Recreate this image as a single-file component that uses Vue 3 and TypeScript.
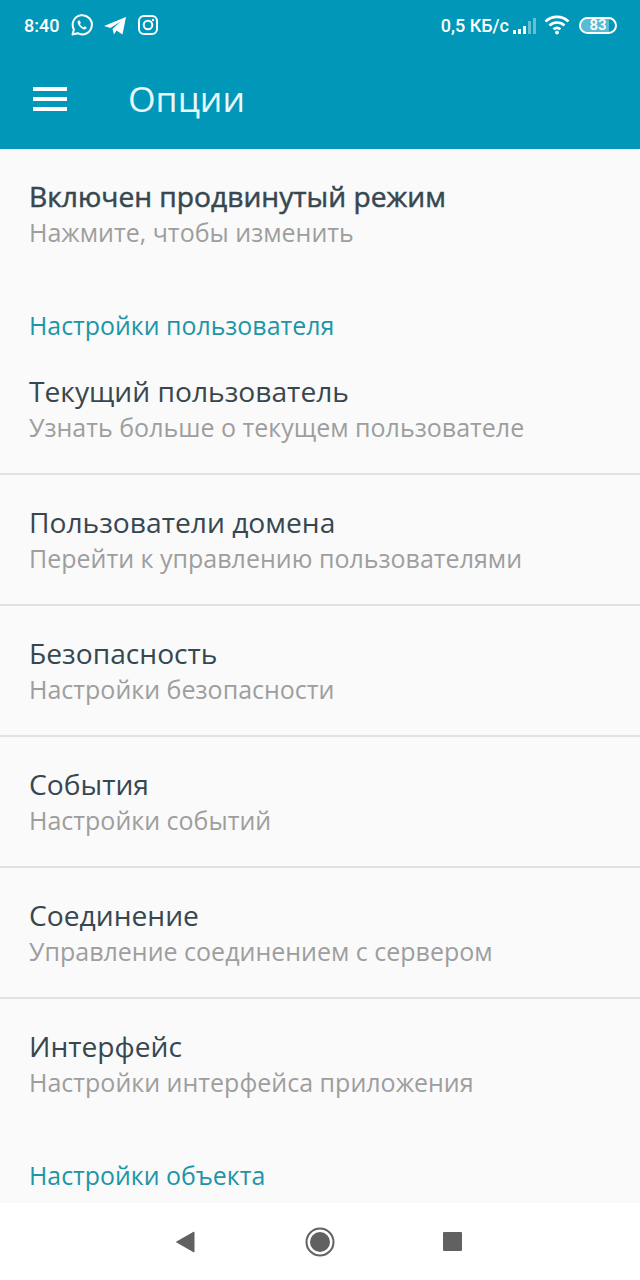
<script setup lang="ts">
interface Row {
  title: string
  sub: string
}

const userRows: Row[] = [
  { title: 'Текущий пользователь', sub: 'Узнать больше о текущем пользователе' },
  { title: 'Пользователи домена', sub: 'Перейти к управлению пользователями' },
  { title: 'Безопасность', sub: 'Настройки безопасности' },
  { title: 'События', sub: 'Настройки событий' },
  { title: 'Соединение', sub: 'Управление соединением с сервером' },
  { title: 'Интерфейс', sub: 'Настройки интерфейса приложения' },
]
</script>

<template>
  <div class="screen">
    <header class="appbar">
      <div class="status">
        <div class="status-left">
          <span class="time">8:40</span>
          <svg class="ic" width="24" height="24" viewBox="0 0 24 24" fill="none" stroke="#fff" stroke-width="2">
            <path d="M2.5 21.5l1.4-5A9.6 9.6 0 1 1 7.600 20.200z" stroke-linejoin="round" />
            <path d="M8.300 7.500c-1 1-1 2.600.4 4.800 1.500 2.300 3.600 3.900 5.500 4.100 1.300.1 2.400-.7 2.600-1.800l-2.300-1.300-1.100 1.100c-1.500-.6-2.800-1.900-3.500-3.400l1-1.100-1.100-2.500z" fill="#fff" stroke="none" />
          </svg>
          <svg class="ic" width="24" height="24" viewBox="0 0 24 24">
            <path d="M1 13L23 4 19.500 21.500 13.500 17.500 11 21.500 9.500 16 17.500 8.500 7.500 15z" fill="#fff" />
          </svg>
          <svg class="ic" width="24" height="24" viewBox="0 0 24 24" fill="none" stroke="#fff" stroke-width="2">
            <rect x="3" y="3" width="18" height="18" rx="5" />
            <circle cx="12" cy="12" r="4.300" />
            <circle cx="17" cy="7" r="1.200" fill="#fff" stroke="none" />
          </svg>
        </div>
        <div class="status-right">
          <span class="speed">0,5 КБ/с</span>
          <span class="signal">
            <i class="b1"></i><i class="b2"></i><i class="b3"></i><i class="b4 off"></i><i class="b5 off"></i>
          </span>
          <svg class="wifi" width="26" height="20" viewBox="0 0 26 20" fill="none" stroke="#fff" stroke-width="2.600">
            <path d="M1.500 6.500a16.500 16.500 0 0 1 23 0" />
            <path d="M5.500 10.500a11 11 0 0 1 15 0" />
            <path d="M9.500 14.300a5.500 5.500 0 0 1 7 0" />
            <circle cx="13" cy="17.500" r="1.900" fill="#fff" stroke="none" />
          </svg>
          <span class="battery"><span class="fill"></span><span class="level">83</span></span>
        </div>
      </div>
      <div class="toolbar">
        <div class="burger"><i></i><i></i><i></i></div>
        <h1>Опции</h1>
      </div>
    </header>

    <main class="list">
      <div class="row mode">
        <div class="title strong">Включен продвинутый режим</div>
        <div class="sub">Нажмите, чтобы изменить</div>
      </div>

      <div class="section first">Настройки пользователя</div>
      <div v-for="r in userRows" :key="r.title" class="row item">
        <div class="title">{{ r.title }}</div>
        <div class="sub">{{ r.sub }}</div>
      </div>

      <div class="section last">Настройки объекта</div>
    </main>

    <nav class="navbar">
      <svg width="24" height="26" viewBox="0 0 24 26"><path d="M21 3V23L3.500 13z" fill="#616161" stroke="#616161" stroke-linejoin="round" /></svg>
      <svg width="30" height="30" viewBox="0 0 30 30">
        <circle cx="15" cy="15" r="13.500" fill="none" stroke="#616161" stroke-width="2" />
        <circle cx="15" cy="15" r="10" fill="#616161" />
      </svg>
      <span class="square"></span>
    </nav>
  </div>
</template>

<style>
body {
  background: #fafafa;
}
</style>

<style scoped>
.screen {
  width: 640px;
  height: 1280px;
  display: flex;
  flex-direction: column;
  overflow: hidden;
  background: #fafafa;
  font-family: "Open Sans", sans-serif;
}

.appbar {
  height: 149px;
  flex: none;
  background: #0097b8;
  color: #fff;
}

.status {
  height: 50px;
  display: flex;
  align-items: center;
  justify-content: space-between;
  padding: 0 23px 0 24px;
  font-family: Roboto, sans-serif;
  font-weight: 500;
  font-size: 18px;
}

.status-left,
.status-right {
  display: flex;
  align-items: center;
}

.status-left .time {
  margin-right: 11px;
}

.status-left .ic {
  margin-right: 9px;
}

.speed {
  margin-right: 4px;
}

.signal {
  display: flex;
  align-items: flex-end;
  gap: 2px;
  height: 18px;
  margin-right: 8px;
}

.signal i {
  width: 3px;
  background: #fff;
}

.signal i.off {
  opacity: 0.4;
}

.b1 { height: 4px; }
.b2 { height: 5px; }
.b3 { height: 8px; }
.b4 { height: 13px; }
.b5 { height: 16px; }

.wifi {
  margin-right: 9px;
}

.battery {
  position: relative;
  width: 34px;
  height: 13px;
  border: 2px solid #fff;
  border-radius: 9px;
  display: flex;
  align-items: center;
  justify-content: center;
  overflow: hidden;
  box-sizing: content-box;
}

.battery .fill {
  position: absolute;
  left: 0;
  top: 0;
  bottom: 0;
  width: 83%;
  background: rgba(255, 255, 255, 0.35);
}

.battery .level {
  position: relative;
  font-size: 15px;
  line-height: 1;
}

.toolbar {
  height: 97px;
  padding-bottom: 2px;
  display: flex;
  align-items: center;
  padding-left: 33px;
}

.burger {
  width: 34px;
  display: flex;
  flex-direction: column;
  gap: 6px;
  margin-right: 61px;
}

.burger i {
  height: 4px;
  background: #fff;
}

h1 {
  margin: 0;
  font-size: 35.5px;
  font-weight: 400;
  line-height: 1;
  color: #e8f8fb;
}

.list {
  flex: 1;
  min-height: 0;
  overflow: hidden;
}

.row {
  padding-left: 29px;
  box-sizing: border-box;
}

.mode {
  height: 132px;
  padding-top: 28px;
}

.item {
  height: 131px;
  padding-top: 28px;
  border-bottom: 2px solid #e2e2e2;
}

.item:nth-last-child(2) {
  border-bottom: none;
}

.title {
  font-size: 28.2px;
  line-height: 38px;
  color: #37474f;
}

.title.strong {
  -webkit-text-stroke: 0.5px #37474f;
}

.sub {
  font-size: 25px;
  line-height: 34px;
  color: #9e9e9e;
}

.section {
  padding-left: 29px;
  font-size: 24.9px;
  line-height: 34px;
  color: #1b96a8;
}

.section.first {
  height: 36px;
  padding-top: 27px;
  box-sizing: content-box;
}

.section.last {
  padding-top: 28px;
}

.navbar {
  height: 77px;
  flex: none;
  background: #fff;
  display: flex;
  align-items: center;
  justify-content: center;
  gap: 108px;
  padding-right: 5px;
}

.square {
  width: 19px;
  height: 19px;
  background: #616161;
  border-radius: 1px;
}
</style>
